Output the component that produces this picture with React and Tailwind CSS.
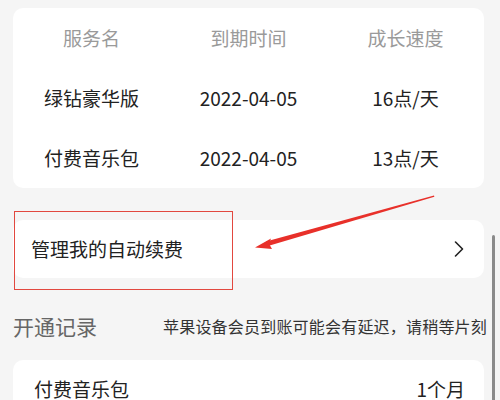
import React from "react";
import { ChevronRight } from "lucide-react";

const rows = [
  { name: "绿钻豪华版", date: "2022-04-05", speed: "16点/天" },
  { name: "付费音乐包", date: "2022-04-05", speed: "13点/天" },
];

export default function App() {
  return (
    <div
      className="relative w-[500px] h-[400px] overflow-hidden bg-[#f5f5f5] px-[13px] pr-[16px]"
      style={{ fontFamily: '"Noto Sans CJK SC", "Noto Sans", sans-serif' }}
    >
      {/* VIP table */}
      <div className="mt-[8px] bg-white rounded-[10px]">
        <div className="grid grid-cols-3 h-[60px] items-center text-center text-[19px] text-[#9a9a9a]">
          <div>服务名</div>
          <div>到期时间</div>
          <div>成长速度</div>
        </div>
        {rows.map((r, i) => (
          <div
            key={i}
            className="grid grid-cols-3 h-[60px] items-center text-center text-[19px] text-[#222]"
          >
            <div>{r.name}</div>
            <div>{r.date}</div>
            <div>{r.speed}</div>
          </div>
        ))}
      </div>

      {/* auto renew */}
      <div className="mt-[32px] h-[58px] bg-white rounded-[10px] flex items-center justify-between pl-[18px] pr-[11px]">
        <span className="text-[19px] text-[#222]">管理我的自动续费</span>
        <ChevronRight className="w-[28px] h-[28px] text-[#222]" strokeWidth={1.4} />
      </div>

      {/* records header */}
      <div className="pt-[34px] pb-[20px] flex items-center justify-between">
        <span className="text-[21px] leading-[28px] text-[#666]">开通记录</span>
        <span className="text-[16px] leading-[28px] text-[#333] tracking-[0.2px] -mr-[3px]">
          苹果设备会员到账可能会有延迟，请稍等片刻
        </span>
      </div>

      <div className="bg-white rounded-t-[10px] h-[58px] flex items-center justify-between pl-[21px] pr-[19px]">
        <span className="text-[19px] text-[#222]">付费音乐包</span>
        <span className="text-[19px] text-[#222]">1个月</span>
      </div>

      {/* annotation box */}
      <div className="absolute left-[14px] top-[211px] w-[219px] h-[79px] border-[1.5px] border-[#e2483f]" />

      {/* annotation arrow */}
      <svg className="absolute left-0 top-0" width="500" height="400" viewBox="0 0 500 400">
        <polygon points="434,195.5 434.4,196.8 268,246 266,241.5" fill="#e8302a" />
        <polygon points="255,247.5 271,238.5 269,243.8 272,249" fill="#e8302a" />
      </svg>

      {/* scrollbar */}
      <div className="absolute left-[492px] top-[235px] w-[3px] h-[170px] rounded-full bg-[#8a8a8a]" />
    </div>
  );
}
